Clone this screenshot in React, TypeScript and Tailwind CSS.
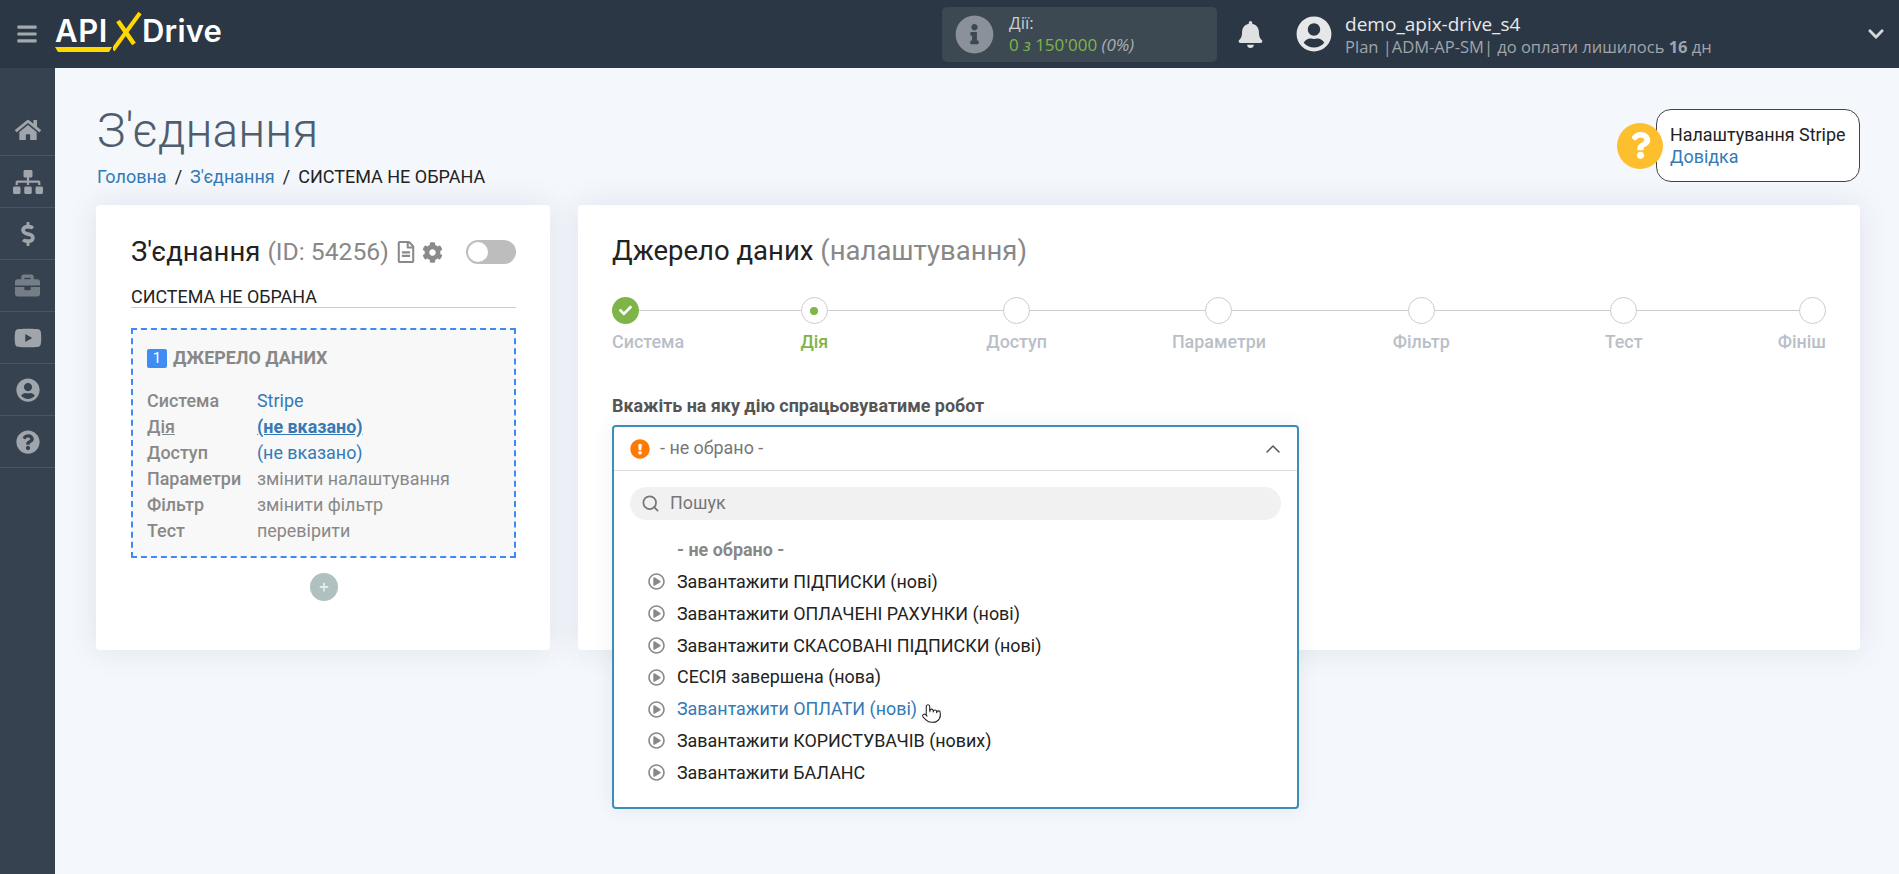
import { FaBars, FaBell, FaBriefcase, FaChevronDown, FaCog, FaDollarSign, FaExclamationCircle, FaHome, FaInfoCircle, FaPlus, FaQuestion, FaQuestionCircle, FaRegFileAlt, FaRegPlayCircle, FaSitemap, FaUserCircle, FaYoutube, FaCheck } from "react-icons/fa";
import { ChevronUp, Pointer, Search } from "lucide-react";

const navItems = [
  { icon: FaHome, size: 26, cls: "" },
  { icon: FaSitemap, size: 30, cls: "" },
  { icon: FaDollarSign, size: 24, cls: "" },
  { icon: FaBriefcase, size: 25, cls: "opacity-60" },
  { icon: FaYoutube, size: 28, cls: "" },
  { icon: FaUserCircle, size: 24, cls: "" },
  { icon: FaQuestionCircle, size: 24, cls: "" },
];

const steps = ["Система", "Дія", "Доступ", "Параметри", "Фільтр", "Тест", "Фініш"];

const sourceRows = [
  { label: "Система", value: "Stripe", valueCls: "text-[#337ab7]" },
  { label: "Дія", value: "(не вказано)", valueCls: "text-[#337ab7] font-bold underline", labelCls: "underline" },
  { label: "Доступ", value: "(не вказано)", valueCls: "text-[#337ab7]" },
  { label: "Параметри", value: "змінити налаштування", valueCls: "text-[#888]" },
  { label: "Фільтр", value: "змінити фільтр", valueCls: "text-[#888]" },
  { label: "Тест", value: "перевірити", valueCls: "text-[#888]" },
];

const options = [
  "Завантажити ПІДПИСКИ (нові)",
  "Завантажити ОПЛАЧЕНІ РАХУНКИ (нові)",
  "Завантажити СКАСОВАНІ ПІДПИСКИ (нові)",
  "СЕСІЯ завершена (нова)",
  "Завантажити ОПЛАТИ (нові)",
  "Завантажити КОРИСТУВАЧІВ (нових)",
  "Завантажити БАЛАНС",
];

function Logo() {
  return (
    <div className="flex items-start h-[44px] ml-[17px] font-['Inter',sans-serif] font-semibold text-white text-[31px] leading-[38px]">
      <div className="flex flex-col w-[58px]">
        <span className="h-[36px] tracking-[0.6px]">API</span>
        <svg width="58" height="6" viewBox="0 0 58 6" className="mt-[-1px]">
          <polygon points="0,0 57,0 54,5 3,5" fill="#ffd800" />
        </svg>
      </div>
      <svg width="30" height="44" viewBox="0 0 30 44" className="-mt-[1px] shrink-0">
        <path d="M0 39 L27 2" stroke="#ffd800" strokeWidth="4" fill="none" />
        <path d="M5 10 L21 33" stroke="#ffd800" strokeWidth="4.5" fill="none" />
      </svg>
      <span className="ml-[-1px] tracking-[0.2px]">Drive</span>
    </div>
  );
}

function Header() {
  return (
    <header className="h-[68px] shrink-0 bg-[#2c3745] flex items-center font-['Open_Sans',sans-serif]">
      <FaBars size={22} className="ml-[16px] text-[#a4a9af]" />
      <Logo />
      <div className="ml-[720px] w-[275px] h-[55px] bg-[#3c4953] rounded-[5px] flex items-center">
        <FaInfoCircle size={39} className="ml-[13px] text-[#8b9198]" />
        <div className="ml-[15px] text-[17px] leading-[22px]">
          <div className="text-[#c9cdd1]">Дії:</div>
          <div className="text-[#7fb548]">
            0 <i>з</i> 150'000 <i className="text-[#a9aeb3]">(0%)</i>
          </div>
        </div>
      </div>
      <FaBell size={27} className="ml-[20px] text-[#dfe0e2]" />
      <FaUserCircle size={36} className="ml-[32px] text-[#e6e7e8]" />
      <div className="ml-[13px] flex-1 pt-[1px]">
        <div className="text-[19px] leading-[23px] text-[#e8e9ea]">demo_apix-drive_s4</div>
        <div className="text-[16.5px] leading-[21px] text-[#a0a5ab]">
          Plan |ADM-AP-SM| до оплати лишилось <b>16</b> дн
        </div>
      </div>
      <FaChevronDown size={18} className="mr-[14px] text-[#d5d7d9]" />
    </header>
  );
}

function Sidebar() {
  return (
    <aside className="w-[55px] shrink-0 bg-[#364250] pt-[36px]">
      {navItems.map((item, i) => (
        <div key={i} className="h-[52px] flex items-center justify-center border-b border-[#4a5562]">
          <item.icon size={item.size} className={`text-[#a0a5ab] ${item.cls}`} />
        </div>
      ))}
    </aside>
  );
}

function ConnectionCard() {
  return (
    <section className="w-[454px] shrink-0 h-[445px] bg-white rounded-[4px] shadow-[0_0_30px_rgba(40,60,90,0.1)] pl-[35px] pr-[34px] pt-[30px]">
      <div className="flex items-center h-[34px]">
        <span className="text-[27.5px] leading-[34px] text-[#222]">З'єднання</span>
        <span className="text-[24.7px] leading-[34px] text-[#888] ml-[7px]">(ID: 54256)</span>
        <FaRegFileAlt size={22} className="ml-[6px] text-[#8a8a8a]" />
        <FaCog size={21} className="ml-[5px] text-[#8a8a8a]" />
        <div className="ml-auto w-[50px] h-[24px] rounded-full bg-[#bdbdbd] flex items-center pl-[2px]">
          <div className="w-[20px] h-[20px] rounded-full bg-white" />
        </div>
      </div>
      <div className="mt-[9px] h-[30px] pt-[8px] border-b border-[#ccc] text-[17.9px] leading-[22px] text-[#222]">СИСТЕМА НЕ ОБРАНА</div>
      <div className="mt-[20px] h-[230px] border-2 border-dashed border-[#4088f5] bg-[#f8f8f8] pl-[14px] pt-[18px]">
        <div className="flex items-center h-[20px]">
          <span className="w-[20px] h-[19px] rounded-[2px] bg-[#3f8cf5] text-white text-[15px] leading-[19px] text-center">1</span>
          <span className="ml-[6px] text-[17.9px] font-bold text-[#888]">ДЖЕРЕЛО ДАНИХ</span>
        </div>
        <div className="mt-[20px] text-[17.9px] leading-[26px]">
          {sourceRows.map((row) => (
            <div key={row.label} className="flex">
              <span className={`w-[110px] font-medium text-[#888] ${row.labelCls ?? ""}`}>{row.label}</span>
              <span className={row.valueCls}>{row.value}</span>
            </div>
          ))}
        </div>
      </div>
      <div className="mt-[15px] mx-auto w-[28px] h-[28px] rounded-full bg-[#b0c0c0] flex items-center justify-center">
        <FaPlus size={10} className="text-[#e4ecec]" />
      </div>
    </section>
  );
}

function Stepper() {
  return (
    <div className="relative mt-[28px] flex justify-between">
      <div className="absolute left-0 right-0 top-[13px] h-[1px] bg-[#ccc]" />
      {steps.map((name, i) => {
        const align = i === 0 ? "items-start" : i === steps.length - 1 ? "items-end" : "items-center";
        return (
          <div key={name} className={`relative w-0 flex flex-col ${align}`}>
            {i === 0 ? (
              <div className="w-[27px] h-[27px] shrink-0 rounded-full bg-[#7fb548] flex items-center justify-center">
                <FaCheck size={13} className="text-white" />
              </div>
            ) : (
              <div className="w-[27px] h-[27px] shrink-0 rounded-full bg-white border border-[#ccc] flex items-center justify-center">
                {i === 1 && <div className="w-[8px] h-[8px] rounded-full bg-[#7fb548]" />}
              </div>
            )}
            <span className={`mt-[6px] text-[17.9px] leading-[24px] font-medium whitespace-nowrap ${i === 1 ? "text-[#7fb548]" : "text-[#b9bfc8]"}`}>{name}</span>
          </div>
        );
      })}
    </div>
  );
}

function ActionSelect() {
  return (
    <div className="mt-[7px] w-[687px] h-[384px] bg-white border-2 border-[#3a8fb7] rounded-[4px] shadow-[0_0_20px_rgba(40,60,90,0.08)]">
      <div className="h-[44px] border-b border-[#ddd] flex items-center pl-[16px] pr-[12px]">
        <FaExclamationCircle size={20} className="text-[#ff7a00]" />
        <span className="ml-[10px] text-[17.9px] text-[#777]">- не обрано -</span>
        <ChevronUp size={24} strokeWidth={1.5} className="ml-auto text-[#555]" />
      </div>
      <div className="mx-[16px] mt-[16px] h-[33px] rounded-full bg-[#f1f1f1] flex items-center pl-[11px]">
        <Search size={19} strokeWidth={2.2} className="text-[#777]" />
        <span className="ml-[10px] text-[17.9px] text-[#777]">Пошук</span>
      </div>
      <div className="mt-[14px] pl-[34px] text-[17.9px] leading-[32px]">
        <div className="pl-[29px] font-bold text-[#888] h-[32px]">- не обрано -</div>
        {options.map((opt, i) => (
          <div key={opt} className={`flex items-center h-[31.8px] ${i === 4 ? "text-[#337ab7]" : "text-[#222]"}`}>
            <FaRegPlayCircle size={17} className="text-[#888] shrink-0" />
            <span className="ml-[12px]">{opt}</span>
            {i === 4 && <Pointer size={21} strokeWidth={1.2} className="ml-[4px] mt-[8px] text-[#222] fill-white" />}
          </div>
        ))}
      </div>
    </div>
  );
}

function SourceCard() {
  return (
    <section className="flex-1 h-[445px] bg-white rounded-[4px] shadow-[0_0_30px_rgba(40,60,90,0.1)] px-[34px] pt-[28px]">
      <h2 className="text-[27.5px] leading-[36px] text-[#222]">
        Джерело даних <span className="text-[#888]">(налаштування)</span>
      </h2>
      <Stepper />
      <div className="mt-[40px] text-[17.9px] leading-[24px] font-bold text-[#555]">Вкажіть на яку дію спрацьовуватиме робот</div>
      <ActionSelect />
    </section>
  );
}

export default function App() {
  return (
    <div className="h-screen overflow-hidden flex flex-col bg-[#f4f7fc] font-['Roboto',sans-serif]">
      <Header />
      <div className="flex flex-1 overflow-hidden">
        <Sidebar />
        <main className="flex-1 pl-[41px] pr-[39px]">
          <div className="flex justify-between h-[137px]">
            <div className="pl-[1px]">
              <h1 className="mt-[37px] text-[48px] leading-[52px] font-light text-[#4f5d6c]">З'єднання</h1>
              <div className="mt-[8px] text-[18px] leading-[24px] text-[#222]">
                <span className="text-[#337ab7]">Головна</span>
                <span className="mx-[8px]">/</span>
                <span className="text-[#337ab7]">З'єднання</span>
                <span className="mx-[8px]">/</span>
                СИСТЕМА НЕ ОБРАНА
              </div>
            </div>
            <div className="mt-[41px] h-[73px] flex items-center">
              <div className="relative z-10 w-[46px] h-[46px] rounded-full bg-[#fdbf2d] flex items-center justify-center -mr-[7px]">
                <FaQuestion size={27} className="text-white" />
              </div>
              <div className="w-[204px] h-[73px] bg-white border border-[#444] rounded-[15px] pl-[13px] pt-[14px] text-[17.9px] leading-[22px]">
                <div className="text-[#222] whitespace-nowrap">Налаштування Stripe</div>
                <div className="text-[#337ab7]">Довідка</div>
              </div>
            </div>
          </div>
          <div className="flex gap-[28px]">
            <ConnectionCard />
            <SourceCard />
          </div>
        </main>
      </div>
    </div>
  );
}
